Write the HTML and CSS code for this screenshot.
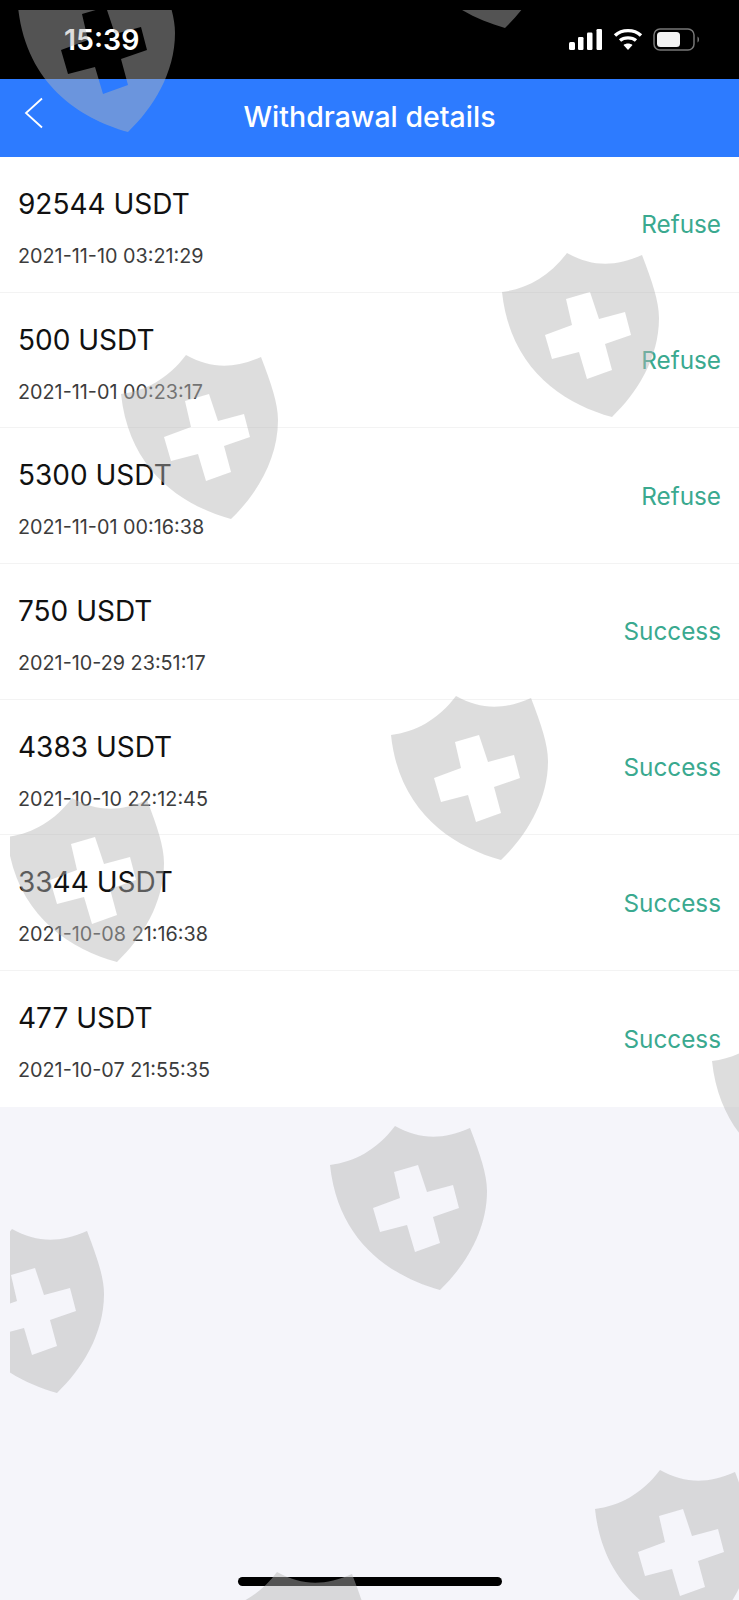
FILE: index.html
```html
<!DOCTYPE html>
<html lang="en">
<head>
  <meta charset="UTF-8"/>
  <meta name="viewport" content="width=device-width, initial-scale=1.0"/>
  <title>Withdrawal details</title>
  <link rel="stylesheet" href="styles.css">
</head>
<body>
  <div class="status-bar">
    <span class="clock">15:39</span>
    <svg class="status-icons" width="132" height="24" viewBox="0 0 132 24">
      <!-- signal -->
      <rect x="0" y="14" width="6" height="8" rx="1.5" fill="#fff"/>
      <rect x="9" y="9" width="5.500" height="13" rx="1.2" fill="#fff"/>
      <rect x="18" y="4.500" width="5.500" height="17.500" rx="1.2" fill="#fff"/>
      <rect x="27.500" y="1" width="5.500" height="21" rx="1.2" fill="#fff"/>
      <!-- wifi -->
      <path d="M46 7.500 C53 1 65 1 72 7.500" fill="none" stroke="#fff" stroke-width="3.400"/>
      <path d="M51 12.500 C55 9 63 9 67 12.500" fill="none" stroke="#fff" stroke-width="3.400"/>
      <path d="M59 22 L54.500 17 C57 15 61 15 63.500 17 Z" fill="#fff"/>
      <!-- battery -->
      <rect x="85" y="1" width="40" height="21" rx="6" fill="none" stroke="#777" stroke-width="1.500"/>
      <rect x="88" y="4" width="23" height="15" rx="3.500" fill="#f2f2f2"/>
      <path d="M128.500 8.500 C130.500 9.500 130.500 13.500 128.500 14.500 Z" fill="#777"/>
    </svg>
  </div>

  <header class="nav-bar">
    <svg class="back-icon" width="20" height="32" viewBox="0 0 20 32">
      <path d="M18 1.500 L2 16 L18 30.500" fill="none" stroke="#fff" stroke-width="1.800"/>
    </svg>
    <h1 class="nav-title">Withdrawal details</h1>
  </header>

  <main class="record-list">
    <div class="record">
      <div class="record-info">
        <div class="record-amount">92544 USDT</div>
        <div class="record-date">2021-11-10 03:21:29</div>
      </div>
      <div class="record-status">Refuse</div>
    </div>
    <div class="record">
      <div class="record-info">
        <div class="record-amount">500 USDT</div>
        <div class="record-date">2021-11-01 00:23:17</div>
      </div>
      <div class="record-status">Refuse</div>
    </div>
    <div class="record">
      <div class="record-info">
        <div class="record-amount">5300 USDT</div>
        <div class="record-date">2021-11-01 00:16:38</div>
      </div>
      <div class="record-status">Refuse</div>
    </div>
    <div class="record">
      <div class="record-info">
        <div class="record-amount">750 USDT</div>
        <div class="record-date">2021-10-29 23:51:17</div>
      </div>
      <div class="record-status">Success</div>
    </div>
    <div class="record">
      <div class="record-info">
        <div class="record-amount">4383 USDT</div>
        <div class="record-date">2021-10-10 22:12:45</div>
      </div>
      <div class="record-status">Success</div>
    </div>
    <div class="record">
      <div class="record-info">
        <div class="record-amount">3344 USDT</div>
        <div class="record-date">2021-10-08 21:16:38</div>
      </div>
      <div class="record-status">Success</div>
    </div>
    <div class="record">
      <div class="record-info">
        <div class="record-amount">477 USDT</div>
        <div class="record-date">2021-10-07 21:55:35</div>
      </div>
      <div class="record-status">Success</div>
    </div>
  </main>

  <div class="home-bar"></div>

  <!-- watermark sits over everything, starts 10px in from the top left -->
  <svg class="watermark" width="729" height="1590" viewBox="10 10 729 1590">
    <defs>
      <path id="shield" fill-rule="evenodd" d="M0 39 C24 36 47 24 65 0 C90 14 113 14 140 2 C150 28 157 48 157 65 C157 105 135 140 110 164 C60 150 8 115 0 39 Z M64 46 L70 72 L43 82 L50 106 L77 99 L85 126 L110 117 L103 91 L129 82 L123 59 L97 66 L88 39 Z"/>
    </defs>
    <use href="#shield" x="18" y="-32"/>
    <use href="#shield" x="395" y="-136"/>
    <use href="#shield" x="502" y="253"/>
    <use href="#shield" x="121" y="355"/>
    <use href="#shield" x="391" y="696"/>
    <use href="#shield" x="7" y="798"/>
    <use href="#shield" x="712" y="1022"/>
    <use href="#shield" x="330" y="1126"/>
    <use href="#shield" x="-53" y="1229"/>
    <use href="#shield" x="595" y="1470"/>
    <use href="#shield" x="212" y="1572"/>
  </svg>
</body>
</html>
```

FILE: styles.css
```css
* {
  box-sizing: border-box;
}

html,
body {
  margin: 0;
  padding: 0;
}

body {
  position: relative;
  width: 739px;
  height: 1600px;
  overflow: hidden;
  background: #f5f5fa;
  font-family: 'Inter', 'Liberation Sans', sans-serif;
}

.status-bar {
  display: flex;
  justify-content: space-between;
  align-items: center;
  height: 79px;
  padding: 0 38px 0 64px;
  background: #000;
  color: #fff;
}

.clock {
  font-size: 28.500px;
  font-weight: 600;
}

.status-icons {
  flex-shrink: 0;
}

.nav-bar {
  position: relative;
  display: flex;
  justify-content: center;
  align-items: center;
  height: 78px;
  padding-bottom: 3px;
  background: #2d7bff;
}

.back-icon {
  position: absolute;
  left: 24px;
  top: 18px;
}

.nav-title {
  margin: 0;
  font-size: 28.500px;
  font-weight: 500;
  color: #fff;
}

.record-list {
  background: #fff;
}

.record {
  display: flex;
  justify-content: space-between;
  align-items: center;
  height: 135.700px;
  padding: 0 18px;
  border-bottom: 1px solid #f3f3f3;
}

.record:last-child {
  border-bottom: none;
}

.record-info {
  display: flex;
  flex-direction: column;
  gap: 17px;
  align-self: flex-start;
  margin-top: 27px;
}

.record-amount {
  font-size: 28px;
  line-height: 40px;
  color: #111;
}

.record-date {
  font-size: 19.800px;
  line-height: 30px;
  color: #3c3c3c;
}

.record-status {
  font-size: 24.300px;
  color: #3aa98f;
}

.home-bar {
  position: absolute;
  left: 238px;
  bottom: 14px;
  width: 264px;
  height: 9px;
  border-radius: 5px;
  background: #000;
}

.watermark {
  position: absolute;
  left: 10px;
  top: 10px;
  fill: rgba(180, 180, 180, 0.46);
  pointer-events: none;
}
```
